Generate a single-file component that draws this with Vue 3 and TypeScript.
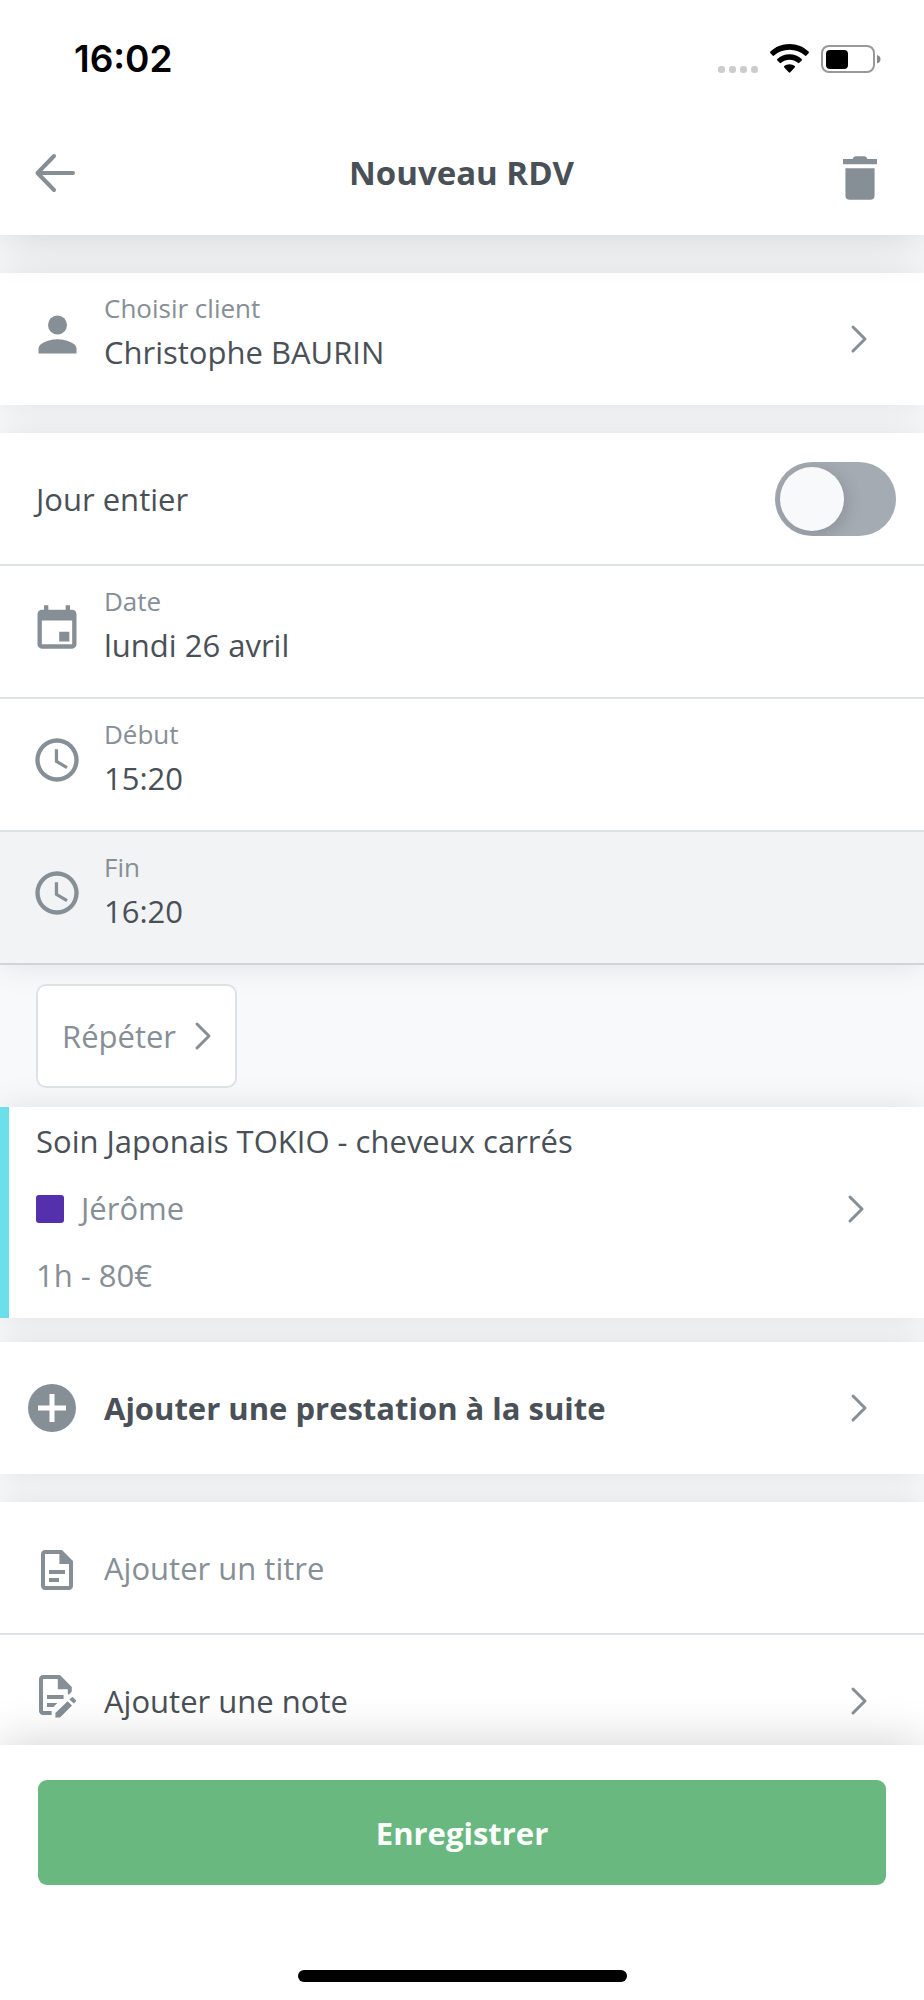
<script setup lang="ts">
import { ref } from 'vue'

interface Slot {
  icon: 'calendar' | 'clock'
  label: string
  value: string
  active: boolean
}

const allDay = ref(false)
const title = ref('')

const slots: Slot[] = [
  { icon: 'calendar', label: 'Date', value: 'lundi 26 avril', active: false },
  { icon: 'clock', label: 'Début', value: '15:20', active: false },
  { icon: 'clock', label: 'Fin', value: '16:20', active: true },
]
</script>

<template>
  <div class="screen">
    <header class="top">
      <div class="status">
        <span class="time">16:02</span>
        <div class="signals">
          <span class="dots"><i></i><i></i><i></i><i></i></span>
          <svg class="wifi" viewBox="0 0 39 29" aria-hidden="true">
            <path d="M19.500 0C27 0 33.800 2.800 38.600 7.600Q39.300 8.400 38.600 9.200L36.400 11.600Q35.700 12.300 34.900 11.600C30.800 7.900 25.400 5.800 19.500 5.800S8.200 7.900 4.100 11.600Q3.300 12.300 2.600 11.600L.4 9.200Q-.3 8.400 .4 7.600C5.200 2.800 12 0 19.500 0Z" />
            <path d="M19.500 10.200C24.200 10.200 28.500 12 31.700 14.900Q32.400 15.600 31.700 16.400L29.300 18.800Q28.600 19.500 27.800 18.800C25.600 16.900 22.700 15.800 19.500 15.800S13.400 16.900 11.200 18.800Q10.400 19.500 9.700 18.800L7.300 16.400Q6.600 15.600 7.300 14.900C10.500 12 14.800 10.200 19.500 10.200Z" />
            <path d="M19.500 20.200C21.500 20.200 23.300 20.900 24.700 22.100Q25.400 22.800 24.700 23.500L20.300 28.300Q19.500 29.100 18.700 28.300L14.300 23.500Q13.600 22.800 14.300 22.100C15.700 20.900 17.500 20.200 19.500 20.200Z" />
          </svg>
          <svg class="battery" viewBox="0 0 60 28" aria-hidden="true">
            <rect x="1" y="1" width="52" height="26" rx="7" fill="none" stroke="#999" stroke-width="2" />
            <rect x="5" y="5" width="22" height="19" rx="4" fill="#000" />
            <path d="M56 10Q59.500 11 59.500 14.200T56 18.500Z" fill="#888" />
          </svg>
        </div>
      </div>
      <div class="bar">
        <button class="icon-button" type="button" aria-label="Retour">
          <svg class="back" viewBox="0 0 40 38" aria-hidden="true"><path d="M19 2 2.500 19 19 36M2.500 19H38" /></svg>
        </button>
        <h1>Nouveau RDV</h1>
        <button class="icon-button" type="button" aria-label="Supprimer">
          <svg class="trash" viewBox="5 3 14 18" aria-hidden="true">
            <path d="M6 8h12v11.200Q18 21 16.200 21H7.800Q6 21 6 19.200ZM5 4.200H9Q9.200 3 10.300 3h3.400Q14.800 3 15 4.200h4v2.100H5Z" />
          </svg>
        </button>
      </div>
    </header>

    <main>
      <section class="card">
        <button class="row" type="button">
          <span class="icon">
            <svg class="person" viewBox="0 0 24 24" aria-hidden="true"><circle cx="12" cy="8" r="4" /><path d="M4 20v-2c0-2.660 5.330-4 8-4s8 1.340 8 4v2Z" /></svg>
          </span>
          <span class="field"><span class="label">Choisir client</span><span class="value">Christophe BAURIN</span></span>
          <svg class="chevron" viewBox="0 0 16 28" aria-hidden="true"><path d="M2 2 14 14 2 26" /></svg>
        </button>
      </section>

      <section class="card schedule">
        <div class="row all-day">
          <label for="all-day">Jour entier</label>
          <input id="all-day" v-model="allDay" class="toggle" type="checkbox" role="switch" />
        </div>
        <button v-for="slot in slots" :key="slot.label" class="row" :class="{ active: slot.active }" type="button">
          <span class="icon">
            <svg v-if="slot.icon === 'calendar'" viewBox="0 -1 24 24" aria-hidden="true">
              <path fill-rule="evenodd" d="M19 3h-1V1h-2v2H8V1H6v2H5C3.890 3 3 3.900 3 5v14c0 1.100.890 2 2 2h14c1.100 0 2-.9 2-2V5c0-1.100-.9-2-2-2ZM19 19H5V8h14ZM13 13.200h4.700v4.500H13Z" />
            </svg>
            <svg v-else viewBox="0 0 24 24" aria-hidden="true">
              <path fill-rule="evenodd" d="M12 2a10 10 0 1 0 0 20 10 10 0 0 0 0-20ZM12 20a8 8 0 1 1 0-16 8 8 0 0 1 0 16Z" />
              <path d="M12.500 7H11v6l5.250 3.150.750-1.230-4.500-2.670Z" />
            </svg>
          </span>
          <span class="field"><span class="label">{{ slot.label }}</span><span class="value">{{ slot.value }}</span></span>
        </button>
      </section>

      <div class="repeat-zone">
        <button class="repeat" type="button">
          Répéter
          <svg class="chevron" viewBox="0 0 16 28" aria-hidden="true"><path d="M2 2 14 14 2 26" /></svg>
        </button>
      </div>

      <section class="card">
        <button class="service" type="button">
          <span class="service-lines">
            <span class="service-name">Soin Japonais TOKIO - cheveux carrés</span>
            <span class="staff"><i class="swatch"></i>Jérôme</span>
            <span>1h - 80€</span>
          </span>
          <svg class="chevron" viewBox="0 0 16 28" aria-hidden="true"><path d="M2 2 14 14 2 26" /></svg>
        </button>
      </section>

      <section class="card add">
        <button class="row" type="button">
          <span class="icon start">
            <svg class="plus" viewBox="0 0 48 48" aria-hidden="true"><circle cx="24" cy="24" r="24" /><path d="M24 10V38M10 24H38" /></svg>
          </span>
          <strong>Ajouter une prestation à la suite</strong>
          <svg class="chevron" viewBox="0 0 16 28" aria-hidden="true"><path d="M2 2 14 14 2 26" /></svg>
        </button>
      </section>

      <section class="card">
        <div class="row title-row">
          <label class="icon" for="title" aria-label="Titre">
            <svg class="doc" viewBox="0 -1 24 24" aria-hidden="true">
              <path fill-rule="evenodd" d="M14.500 2H6C4.900 2 4 2.900 4 4v16c0 1.100.9 2 2 2h12c1.100 0 2-.9 2-2V7.500ZM18 20H6V4h7.200v5H18ZM8 12h8v2H8ZM8 16h5v2H8Z" />
            </svg>
          </label>
          <input id="title" v-model="title" class="title-input" type="text" placeholder="Ajouter un titre" />
        </div>
        <button class="row" type="button">
          <span class="icon">
            <svg class="doc" viewBox="1 3 24 24" aria-hidden="true">
              <path fill-rule="evenodd" d="M14.500 2H6C4.900 2 4 2.900 4 4v16c0 1.100.9 2 2 2h4.300v-2H6V4h7.400v5.100h5v2.400l.5.400 1.500-1.700V8ZM8 12h8.300v2H8ZM8 16h5.200l-2 2H8ZM12.200 23.200v-2.200l6.100-5.900 2.200 2.200-6 5.900ZM19.200 14.200l1.100-1q.4-.3.800 0l1.300 1.300q.3.400 0 .8l-1 1Z" />
            </svg>
          </span>
          <span class="value">Ajouter une note</span>
          <svg class="chevron" viewBox="0 0 16 28" aria-hidden="true"><path d="M2 2 14 14 2 26" /></svg>
        </button>
      </section>
    </main>

    <footer>
      <button class="save" type="button">Enregistrer</button>
      <div class="home"></div>
    </footer>
  </div>
</template>

<style>
body {
  background: #f8f9fb;
}
</style>

<style scoped>
* {
  box-sizing: border-box;
}

.screen {
  display: flex;
  flex-direction: column;
  height: 100vh;
  overflow: hidden;
  background: #f8f9fb;
  color: #495057;
  font-family: "Open Sans", "Noto Sans", sans-serif;
  font-size: 31px;
  line-height: 48px;
}

button,
input {
  margin: 0;
  border: 0;
  padding: 0;
  background: transparent;
  color: inherit;
  font: inherit;
  text-align: left;
}

svg {
  flex: none;
  display: block;
  fill: #868e96;
  overflow: visible;
}

.top {
  position: relative;
  z-index: 2;
  flex: none;
  background: #fff;
  box-shadow: 0 4px 46px rgba(0, 0, 0, 0.16);
}

.status {
  display: flex;
  align-items: center;
  justify-content: space-between;
  height: 110px;
  padding: 7px 43px 0 74px;
}

.time {
  color: #000;
  font-family: Inter, sans-serif;
  font-size: 37px;
  font-weight: 600;
}

.signals {
  display: flex;
  align-items: center;
  gap: 12px;
}

.dots {
  display: flex;
  align-self: flex-end;
  gap: 4px;
}

.dots i {
  width: 7px;
  height: 7px;
  border-radius: 3px;
  background: #ccc;
}

.wifi {
  width: 39px;
  height: 29px;
  fill: #000;
}

.battery {
  width: 60px;
  height: 28px;
}

.bar {
  display: grid;
  grid-template-columns: 48px 1fr 48px;
  align-items: center;
  height: 125px;
  padding: 0 36px 0 35px;
}

h1 {
  margin: 0;
  font-size: 33px;
  font-weight: 700;
  text-align: center;
}

.icon-button {
  display: flex;
  align-items: center;
  height: 60px;
}

.back {
  width: 40px;
  height: 38px;
  fill: none;
  stroke: #868e96;
  stroke-width: 4;
  stroke-linecap: round;
  stroke-linejoin: round;
}

.trash {
  width: 34px;
  height: 44px;
  margin: 10px auto 0 3px;
}

main {
  flex: 1;
  min-height: 0;
  padding-top: 38px;
  overflow: hidden auto;
  scrollbar-width: none;
}

.card {
  background: #fff;
  box-shadow: 0 0 32px rgba(0, 0, 0, 0.1);
}

.card.schedule {
  margin-top: 28px;
}

.card.add {
  margin: 24px 0 28px;
}

.row {
  display: flex;
  align-items: center;
  gap: 18px;
  width: 100%;
  height: 132px;
  padding: 0 57px 0 28px;
}

.schedule .row,
.title-row {
  height: 133px;
  border-bottom: 2px solid #dee2e6;
}

.schedule .row.active {
  border-color: #ced4da;
  background: #f1f3f5;
}

.row.all-day {
  justify-content: space-between;
  padding: 0 28px 0 36px;
}

.icon {
  display: flex;
  flex: none;
  justify-content: center;
  width: 58px;
}

.field + .chevron,
.value + .chevron,
strong + .chevron {
  margin-left: auto;
}

.icon.start {
  justify-content: flex-start;
}

.icon svg {
  width: 52px;
  height: 52px;
}

.row:has(.field) .icon {
  padding-bottom: 9px;
}

.icon svg.person {
  width: 57px;
  height: 57px;
}

.icon svg.doc,
.icon svg.plus {
  width: 48px;
  height: 48px;
}

.plus path {
  stroke: #fff;
  stroke-width: 5;
}

.field {
  display: flex;
  flex-direction: column;
  padding-bottom: 14px;
}

.label {
  color: #868e96;
  font-size: 26px;
  line-height: 40px;
}

.chevron {
  width: 16px;
  height: 28px;
  fill: none;
  stroke: #868e96;
  stroke-width: 3;
  stroke-linecap: round;
  stroke-linejoin: round;
}

.toggle {
  position: relative;
  width: 121px;
  height: 74px;
  border-radius: 37px;
  background: #a5abb3;
  appearance: none;
  overflow: hidden;
}

.toggle::before {
  content: "";
  position: absolute;
  top: 5px;
  left: 5px;
  width: 64px;
  height: 64px;
  border-radius: 50%;
  background: #f8f9fb;
  box-shadow: 2px 4px 18px rgba(0, 0, 0, 0.16);
}

.toggle:checked {
  background: #69b87f;
}

.toggle:checked::before {
  left: 52px;
}

.repeat-zone {
  padding: 19px 36px;
}

.repeat {
  position: relative;
  display: flex;
  align-items: center;
  gap: 19px;
  height: 104px;
  padding: 0 24px;
  border: 2px solid #dee2e6;
  border-radius: 10px;
  background: #fff;
  color: #868e96;
}

.service {
  display: flex;
  align-items: center;
  justify-content: space-between;
  width: 100%;
  padding: 1px 60px 9px 27px;
  border-left: 9px solid #6bdfea;
  color: #868e96;
}

.service-lines {
  display: flex;
  flex-direction: column;
  line-height: 67px;
}

.service-name {
  color: #495057;
}

.staff {
  display: flex;
  align-items: center;
  gap: 17px;
}

.swatch {
  width: 28px;
  height: 28px;
  border-radius: 3px;
  background: #5430ac;
}

.title-input {
  flex: 1;
  min-width: 0;
  height: 64px;
}

.title-input::placeholder {
  color: #868e96;
  opacity: 1;
}

footer {
  position: relative;
  z-index: 2;
  display: flex;
  flex: none;
  flex-direction: column;
  align-items: center;
  padding: 35px 38px 18px;
  background: #fff;
  box-shadow: 0 0 48px rgba(0, 0, 0, 0.19);
}

.save {
  width: 100%;
  height: 105px;
  border-radius: 9px;
  background: #69b87f;
  color: #fff;
  font-weight: 700;
  text-align: center;
}

.home {
  width: 36%;
  min-width: 329px;
  height: 12px;
  margin-top: 85px;
  border-radius: 6px;
  background: #000;
}
</style>
